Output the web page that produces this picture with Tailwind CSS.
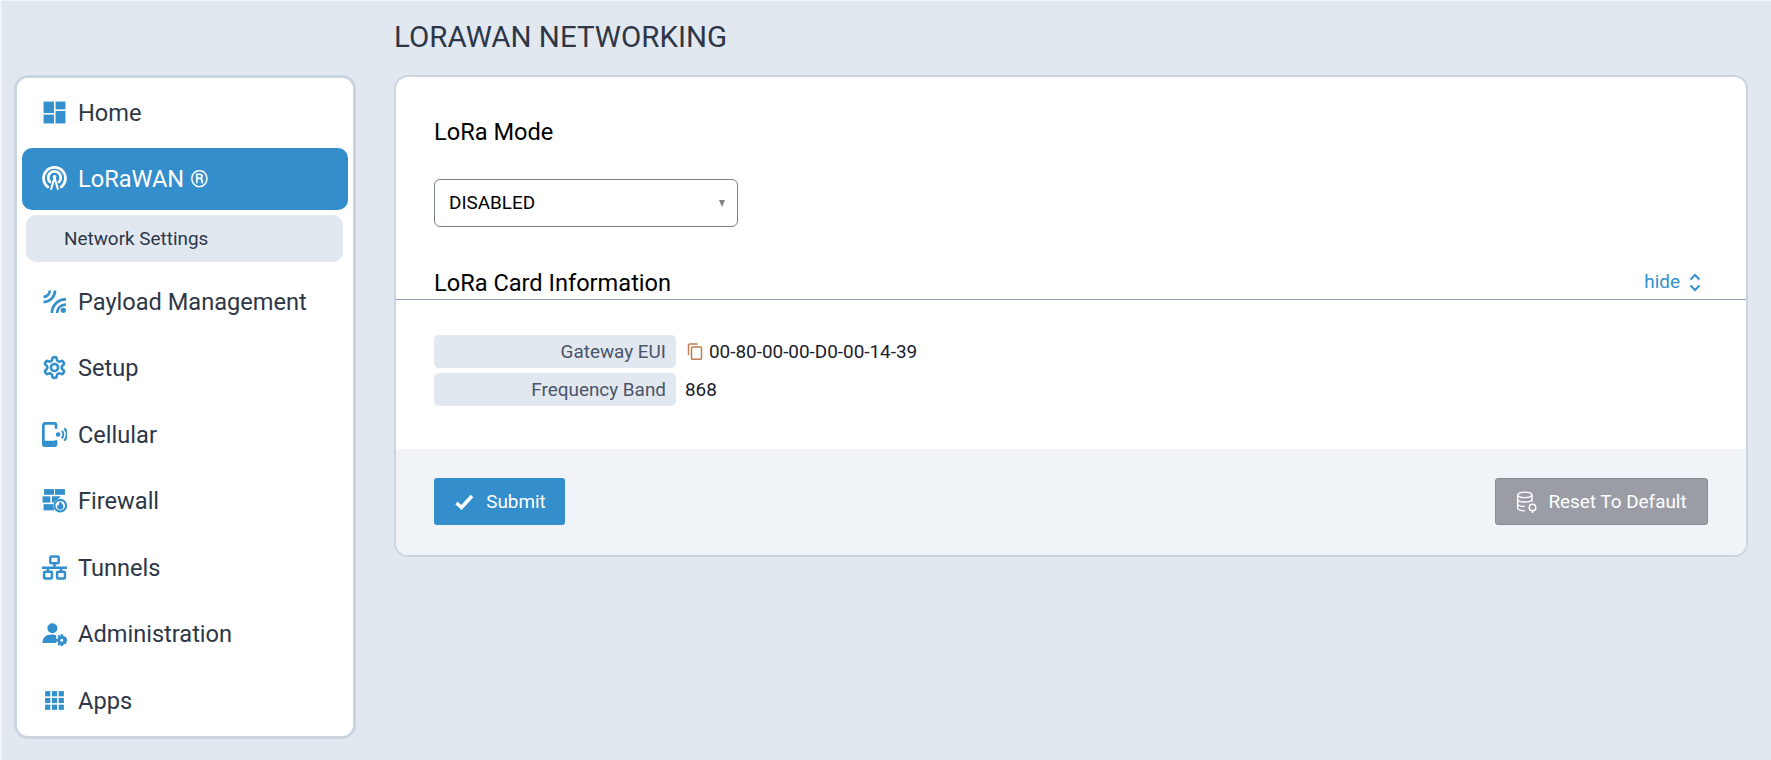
<!DOCTYPE html>
<html lang="en">
<head>
    <meta charset="UTF-8">
    <meta name="viewport" content="width=device-width, initial-scale=1.0">
    <title>LoRaWAN Networking</title>
    <script src="https://cdn.jsdelivr.net/npm/@tailwindcss/browser@4"></script>
</head>
<body class="bg-[#e2e8f0] font-['Roboto',sans-serif] text-[#2d3748] overflow-hidden">
    <div class="flex h-[760px] w-[1771px] pl-[14px] border-l-2 border-t border-[#f1f4f8]">
        <!-- sidebar -->
        <aside class="mt-[74px] w-[342px] h-[664px] -ml-[2px] shrink-0 bg-white border-[3px] border-[#cbd5e0] rounded-[14px]">
            <nav class="flex flex-col gap-1 px-[5px] pt-[3px] text-[23.600px]">
                <a class="h-[62.5px] flex items-center pl-[20px] pt-[3px] gap-[11px]">
                    <svg class="w-[25px] h-[25px] -mt-[3px] shrink-0 text-[#3490cc]" viewBox="0 0 24 24" fill="currentColor"><rect x="1.500" y="1.500" width="10" height="11"/><rect x="1.500" y="14" width="10" height="8.500"/><rect x="13" y="1.500" width="9.500" height="7.500"/><rect x="13" y="10.500" width="9.500" height="12"/></svg>
                    <span>Home</span>
                </a>
                <a class="h-[62.5px] flex items-center pl-[20px] pt-[2px] gap-[11px] bg-[#348ecb] rounded-[10px] text-white">
                    <svg class="w-[25px] h-[25px] -mt-[2px] shrink-0" viewBox="0 0 24 24" fill="none" stroke="currentColor" stroke-width="2.600" stroke-linecap="round"><path d="M5.500 20A10.500 10.500 0 1 1 18.500 20"/><path d="M7.800 15.500A6 6 0 1 1 16.200 15.500"/><circle cx="12" cy="10.500" r="1.800" fill="currentColor" stroke="none"/><path d="M12 11 8.800 22M12 11l3.200 11" stroke-width="2"/></svg>
                    <span>LoRaWAN ®</span>
                </a>
                <a class="h-[47px] mt-[1px] ml-1 mr-[5px] flex items-center pl-[38px] pt-[1px] bg-[#e2e8f0] rounded-[10px] text-[18.900px]">Network Settings</a>
                <a class="h-[62.5px] mt-[4px] flex items-center pl-[20px] pt-[3px] gap-[11px]">
                    <svg class="w-[25px] h-[25px] -mt-[3px] shrink-0 text-[#3490cc]" viewBox="0 0 24 24" fill="none" stroke="currentColor" stroke-width="2.600"><path d="M1.500 7.500A6 6 0 0 0 7.500 1.500"/><path d="M1.500 12.500A11 11 0 0 0 12.500 1.500"/><path d="M9.500 23A13 13 0 0 1 23 10"/><path d="M14.500 23A8 8 0 0 1 23 15"/><circle cx="20.500" cy="20.500" r="2.500" fill="currentColor" stroke="none"/></svg>
                    <span>Payload Management</span>
                </a>
                <a class="h-[62.5px] flex items-center pl-[20px] pt-[2px] gap-[11px]">
                    <svg class="w-[25px] h-[25px] -mt-[2px] shrink-0 text-[#3490cc]" viewBox="0 0 24 24" fill="none" stroke="currentColor" stroke-width="2.500"><path d="M12.220 2h-.44a2 2 0 0 0-2 2v.18a2 2 0 0 1-1 1.730l-.43.250a2 2 0 0 1-2 0l-.15-.08a2 2 0 0 0-2.730.730l-.22.380a2 2 0 0 0 .730 2.730l.15.100a2 2 0 0 1 1 1.720v.510a2 2 0 0 1-1 1.740l-.15.090a2 2 0 0 0-.730 2.730l.22.380a2 2 0 0 0 2.730.730l.15-.08a2 2 0 0 1 2 0l.43.250a2 2 0 0 1 1 1.730V20a2 2 0 0 0 2 2h.44a2 2 0 0 0 2-2v-.18a2 2 0 0 1 1-1.730l.43-.25a2 2 0 0 1 2 0l.15.080a2 2 0 0 0 2.730-.730l.22-.39a2 2 0 0 0-.730-2.730l-.15-.08a2 2 0 0 1-1-1.740v-.5a2 2 0 0 1 1-1.740l.15-.09a2 2 0 0 0 .730-2.730l-.22-.38a2 2 0 0 0-2.730-.730l-.15.080a2 2 0 0 1-2 0l-.43-.25a2 2 0 0 1-1-1.730V4a2 2 0 0 0-2-2z"/><circle cx="12" cy="12" r="3.400"/></svg>
                    <span>Setup</span>
                </a>
                <a class="h-[62.5px] flex items-center pl-[20px] pt-[3px] gap-[11px]">
                    <svg class="w-[25px] h-[25px] -mt-[3px] shrink-0 text-[#3490cc]" viewBox="0 0 24 24" fill="none" stroke="currentColor" stroke-width="2.600"><path d="M13.500 6.500V3A1.700 1.700 0 0 0 11.800 1.300H3A1.700 1.700 0 0 0 1.300 3v18A1.700 1.700 0 0 0 3 22.700h8.800A1.700 1.700 0 0 0 13.500 21v-3.500"/><path d="M1.300 20h12.200" stroke-width="4"/><circle cx="15.500" cy="12" r="2.200" fill="currentColor" stroke="none"/><path d="M19 8.500a5 5 0 0 1 0 7" stroke-width="2"/><path d="M21.500 6a9 9 0 0 1 0 12" stroke-width="2"/></svg>
                    <span>Cellular</span>
                </a>
                <a class="h-[62.5px] flex items-center pl-[20px] pt-[2px] gap-[11px]">
                    <svg class="w-[25px] h-[25px] -mt-[2px] shrink-0 text-[#3490cc]" viewBox="0 0 24 24" fill="currentColor"><rect x="2" y="1" width="9.500" height="5.500"/><rect x="12.500" y="1" width="9.500" height="5.500"/><rect x="0.500" y="8" width="7.500" height="6"/><path d="M9.500 8H18L12 14H9.500z"/><rect x="1.500" y="15.500" width="10" height="6"/><circle cx="17.500" cy="17" r="6.800" fill="#fff"/><circle cx="17.500" cy="17" r="5.600" fill="none" stroke="currentColor" stroke-width="2"/><path d="M17.500 12.500c.5 1.800 3 2.800 3 5.200a3 3 0 0 1-6 0c0-.8.300-1.400.7-1.900.2.700.5 1 .9 1.100 0-1.600.6-3.200 1.400-4.400z"/></svg>
                    <span>Firewall</span>
                </a>
                <a class="h-[62.5px] flex items-center pl-[20px] pt-[3px] gap-[11px]">
                    <svg class="w-[25px] h-[25px] -mt-[3px] shrink-0 text-[#3490cc]" viewBox="0 0 24 24" fill="none" stroke="currentColor" stroke-width="2.400"><rect x="8" y="1.500" width="8" height="6.500" rx="1"/><rect x="2" y="16" width="7.500" height="6.500" rx="1"/><rect x="14.500" y="16" width="7.500" height="6.500" rx="1"/><path d="M12 8v4M0 12.300h24M5.700 12.300V16M18.300 12.300V16"/></svg>
                    <span>Tunnels</span>
                </a>
                <a class="h-[62.5px] flex items-center pl-[20px] pt-[2px] gap-[11px]">
                    <svg class="w-[25px] h-[25px] -mt-[2px] shrink-0 text-[#3490cc]" viewBox="0 0 24 24" fill="currentColor"><circle cx="10" cy="7" r="4.800"/><path d="M.500 21c0-5 3-8 9-8 1.500 0 3 .2 4.200.6V21z"/><circle cx="19" cy="18.500" r="3" fill="none" stroke="currentColor" stroke-width="3"/><path d="M17.800 12.800h2.400v2.400h-2.400zM17.800 21.800h2.400v2.200h-2.400zM13.300 17.300h2.400v2.400h-2.400zM22.300 17.300h1.700v2.400h-1.700zM14.800 14.300l1.400-1 1.400 1.400-1.400 1.400zM21 20.800l1.400-1.400 1.400 1.400-1.400 1.400zM14.800 22.700l1.400 1 1.400-1.400-1.400-1.400zM21 16.200l1.400 1.400 1.400-1.400-1.400-1.400z"/></svg>
                    <span>Administration</span>
                </a>
                <a class="h-[62.5px] flex items-center pl-[20px] pt-[3px] gap-[11px]">
                    <svg class="w-[25px] h-[25px] -mt-[3px] shrink-0 text-[#3490cc]" viewBox="0 0 24 24" fill="currentColor"><rect x="3" y="3" width="5" height="5"/><rect x="9.500" y="3" width="5" height="5"/><rect x="16" y="3" width="5" height="5"/><rect x="3" y="9.500" width="5" height="5"/><rect x="9.500" y="9.500" width="5" height="5"/><rect x="16" y="9.500" width="5" height="5"/><rect x="3" y="16" width="5" height="5"/><rect x="9.500" y="16" width="5" height="5"/><rect x="16" y="16" width="5" height="5"/></svg>
                    <span>Apps</span>
                </a>
            </nav>
        </aside>

        <!-- main -->
        <main class="ml-[38px] w-[1354px] shrink-0">
            <h1 class="h-[74px] flex items-center pb-[2px] text-[29.500px] uppercase">LoRaWAN Networking</h1>
            <section class="h-[482px] flex flex-col bg-white border-2 border-[#cbd5e0] rounded-[14px] overflow-hidden text-black">
                <div class="flex-1 pt-[41px]">
                    <h2 class="px-[38px] text-[23.600px] leading-[28px]">LoRa Mode</h2>
                    <div class="ml-[38px] mt-[33px] w-[304px] h-[48px] flex items-center justify-between pl-[14px] pr-[12px] pt-[1px] border border-[#7a7f8a] rounded-[6px] text-[18.900px]">
                        <span>DISABLED</span>
                        <span class="w-0 h-0 border-x-[3.500px] border-x-transparent border-t-[7px] border-t-[#808080]"></span>
                    </div>
                    <div class="mt-[41px] h-[32px] px-[38px] flex items-center justify-between border-b border-[#8ea3b8] pb-[2px] -mb-px">
                        <h2 class="text-[23.600px] leading-[28px]">LoRa Card Information</h2>
                        <a class="flex items-center gap-[9px] pr-[7px] text-[#3490cc] text-[18.900px]">hide
                            <svg class="w-[12px] h-[19px]" viewBox="0 0 12 19" fill="none" stroke="currentColor" stroke-width="2"><path d="M1.500 6.500 6 2l4.500 4.500M1.500 12.500 6 17l4.500-4.500"/></svg>
                        </a>
                    </div>
                    <div class="mt-[36px] px-[38px] flex flex-col gap-[5px] text-[18.900px]">
                        <div class="flex items-center h-[33px]">
                            <span class="w-[242px] h-full flex items-center justify-end pr-[10px] pt-[1px] bg-[#e2e8f0] rounded-[5px] text-[#4a5568]">Gateway EUI</span>
                            <svg class="w-[16px] h-[17px] -mt-[1px] ml-[11px] mr-[6px] text-[#bf7f50]" viewBox="0 0 16 17" fill="none" stroke="currentColor" stroke-width="1.500"><path d="M10.500 1H3A1.500 1.500 0 0 0 1.500 2.500V12"/><rect x="4.500" y="4" width="10" height="12.300" rx="1"/></svg>
                            <span class="pt-[1px] text-[#1a202c]">00-80-00-00-D0-00-14-39</span>
                        </div>
                        <div class="flex items-center h-[33px]">
                            <span class="w-[242px] h-full flex items-center justify-end pr-[10px] pt-[1px] bg-[#e2e8f0] rounded-[5px] text-[#4a5568]">Frequency Band</span>
                            <span class="ml-[9px] pt-[1px] text-[#1a202c]">868</span>
                        </div>
                    </div>
                </div>
                <div class="h-[106px] shrink-0 px-[38px] pt-[29px] flex justify-between items-start bg-[#f0f3f8]">
                    <button class="h-[47px] w-[131px] flex items-center justify-center gap-[12px] pl-[2px] pt-[1px] bg-[#348ecb] rounded-[3px] text-white text-[18.900px]">
                        <svg class="w-[19px] h-[16px]" viewBox="0 0 19 16" fill="none" stroke="currentColor" stroke-width="3.600"><path d="M1.500 9 6.500 13.500 17 2"/></svg>
                        Submit
                    </button>
                    <button class="h-[47px] w-[213px] flex items-center justify-center gap-[10px] pt-[1px] bg-[#9a9da6] border border-[#888b94] rounded-[3px] text-white text-[18.900px]">
                        <svg class="w-[22px] h-[22px]" viewBox="0 0 20 20" fill="none" stroke="currentColor" stroke-width="1.300"><ellipse cx="8" cy="3.500" rx="6.500" ry="2.500"/><path d="M1.500 3.500v12c0 1.300 2.500 2.500 6.500 2.500M14.500 3.500v6M1.500 7.500c0 1.300 2.500 2.500 6.500 2.500s6.500-1.200 6.500-2.500M1.500 11.500c0 1.300 2.500 2.500 6.500 2.500"/><circle cx="15" cy="15" r="3"/><path d="M15 18v2"/></svg>
                        Reset To Default
                    </button>
                </div>
            </section>
        </main>
    </div>
</body>
</html>
